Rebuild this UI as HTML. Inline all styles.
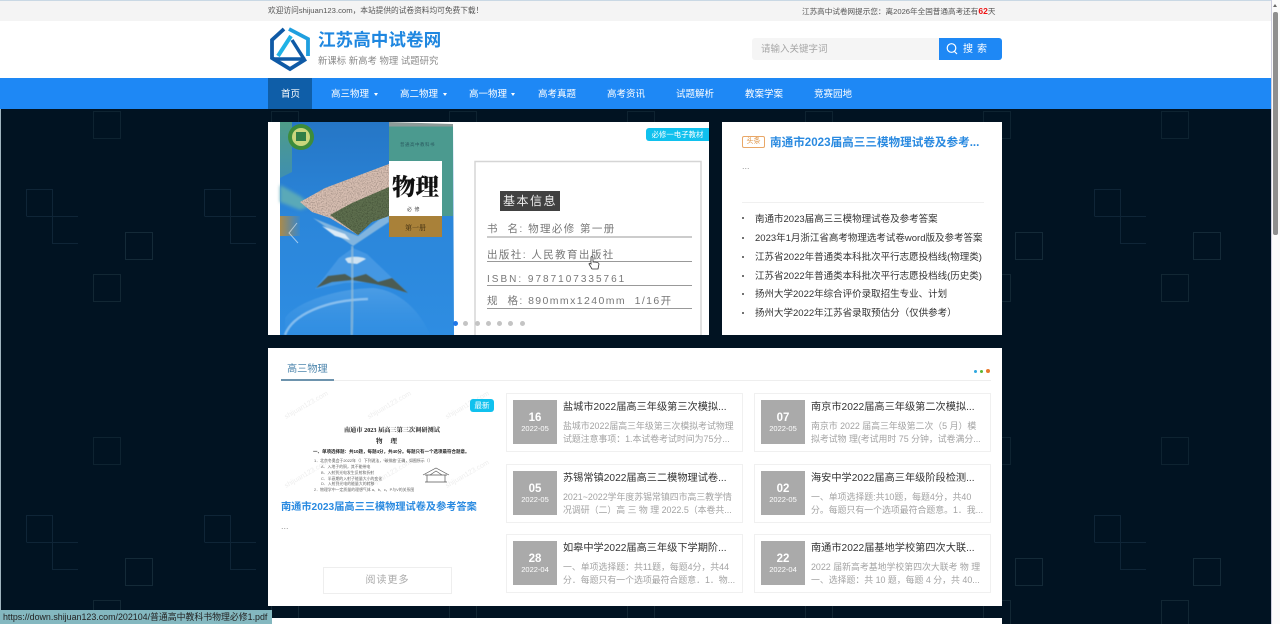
<!DOCTYPE html>
<html lang="zh"><head><meta charset="utf-8"><title>江苏高中试卷网</title>
<style>
html,body{margin:0;padding:0;width:1280px;height:624px;overflow:hidden;background:#011322}
body{position:relative;font-family:"Liberation Sans","Noto Sans CJK SC",sans-serif;color:#333}
.a,.t{position:absolute;white-space:nowrap}
.t{line-height:14px}
.n{top:88px;font-size:9.5px;color:#fff}
.car{position:absolute;width:0;height:0;border-left:2.5px solid transparent;border-right:2.5px solid transparent;border-top:3px solid #fff;top:92.5px}
.card{position:absolute;width:235px;height:57px;background:#fff;border:1px solid #f0f0f0;box-sizing:content-box;overflow:hidden}
.d{position:absolute;left:6px;top:6px;width:44px;height:44px;background:#aaa;color:#fff;text-align:center}
.d b{position:absolute;left:0;right:0;top:11px;font-size:11.5px;line-height:14px}
.d i{position:absolute;left:0;right:0;top:23px;font-style:normal;font-size:7.5px;line-height:12px}
.h{position:absolute;left:56px;top:7px;font-size:10.2px;line-height:14px;color:#333;white-space:nowrap}
.p{position:absolute;left:56px;font-size:8.9px;line-height:12px;color:#a3a3a3;white-space:nowrap}
.l{position:absolute;left:755px;font-size:9.5px;line-height:14px;color:#333;white-space:nowrap}
.b{position:absolute;left:742px;width:2px;height:2px;border-radius:50%;background:#444}
.r{position:absolute;left:487px;width:205px;height:1px;background:#999}
.q{position:absolute;left:487px;font-size:10.5px;line-height:14px;color:#777;letter-spacing:1.4px;white-space:nowrap}
.dot{position:absolute;top:321px;width:5px;height:5px;border-radius:50%;background:#c4c4c4}
.w{position:absolute;font-size:7px;color:#eee;transform:rotate(-30deg);white-space:nowrap}
</style></head><body>

<svg class="a" style="left:0;top:109px" width="1271" height="515">
<defs><pattern id="pt" x="0" y="-109" width="178" height="326" patternUnits="userSpaceOnUse">
<g fill="none" stroke-width="1">
<rect x="125.500" y="232.500" width="27" height="27" stroke="#142a38"/>
<path d="M26.500 216V189.500H52.500V216.500H26.500M52.500 216.500H78M52.500 216.500V243.500H78" stroke="#11273a" stroke-opacity=".9"/>
<rect x="93.500" y="111.500" width="27" height="27" stroke="#0e2331"/>
<rect x="93.500" y="274.500" width="27" height="27" stroke="#122734"/>
</g></pattern></defs>
<rect width="1271" height="515" fill="#011322"/><rect width="1271" height="515" fill="url(#pt)"/>
</svg>
<div class="a" style="left:0;top:0;width:1px;height:624px;background:#9fb4bf"></div>

<!-- top bar -->
<div class="a" style="left:0;top:0;width:1271px;height:21px;background:#f4f4f4;border-top:1px solid #c9d8e4;box-sizing:border-box"></div>
<div class="t" style="left:268px;top:4px;font-size:7.7px;color:#555">欢迎访问shijuan123.com，本站提供的试卷资料均可免费下载！</div>
<div class="t" style="left:802px;top:4px;font-size:7.6px;color:#555">江苏高中试卷网提示您：离2026年全国普通高考还有<b style="color:#e11;font-size:8.5px">62</b>天</div>

<!-- header -->
<div class="a" style="left:0;top:21px;width:1271px;height:57px;background:#fff"></div>
<svg class="a" style="left:268px;top:26px" width="44" height="46" viewBox="268 26 44 46">
<path d="M284 29 272 40 272 58 290 69 306 59" fill="none" stroke="#0f5aa6" stroke-width="3.800"/>
<path d="M289 29 308 39 308 56" fill="none" stroke="#1f9fdf" stroke-width="3.800"/>
<path d="M291 36 278 56" fill="none" stroke="#1fb2e6" stroke-width="4"/>
<path d="M292 40 304 59" fill="none" stroke="#0f5aa6" stroke-width="3.500"/>
<path d="M273 59H304" fill="none" stroke="#0f5aa6" stroke-width="3.500"/>
</svg>
<div class="a" style="left:318px;top:29px;font-size:17.6px;line-height:22px;font-weight:bold;color:#1f87e0">江苏高中试卷网</div>
<div class="a" style="left:318px;top:54px;font-size:9.4px;line-height:14px;color:#8a8a8a">新课标 新高考 物理 试题研究</div>

<div class="a" style="left:752px;top:38px;width:187px;height:22px;background:#f5f5f5;border-radius:3px 0 0 3px"></div>
<div class="a" style="left:761px;top:43px;font-size:9.5px;line-height:14px;color:#a5a5a5">请输入关键字词</div>
<div class="a" style="left:939px;top:38px;width:63px;height:22px;background:#1e88f5;border-radius:0 3px 3px 0"></div>
<svg class="a" style="left:945px;top:42px" width="14" height="14"><circle cx="6.500" cy="6" r="4.300" fill="none" stroke="#fff" stroke-width="1.200"/><path d="M9.500 9.500 12 12" stroke="#fff" stroke-width="1.200"/></svg>
<div class="a" style="left:963px;top:43px;font-size:10px;line-height:14px;color:#fff;letter-spacing:4px">搜索</div>

<!-- nav -->
<div class="a" style="left:0;top:78px;width:1271px;height:31px;background:#1e88f5"></div>
<div class="a" style="left:268px;top:78px;width:44px;height:31px;background:#0f5ea8"></div>
<div class="t n" style="left:281px">首页</div>
<div class="t n" style="left:331px">高三物理</div><div class="car" style="left:373.500px"></div>
<div class="t n" style="left:400px">高二物理</div><div class="car" style="left:442.500px"></div>
<div class="t n" style="left:469px">高一物理</div><div class="car" style="left:510.500px"></div>
<div class="t n" style="left:538px">高考真题</div>
<div class="t n" style="left:607px">高考资讯</div>
<div class="t n" style="left:676px">试题解析</div>
<div class="t n" style="left:745px">教案学案</div>
<div class="t n" style="left:814px">竞赛园地</div>

<!-- carousel -->
<div class="a" style="left:268px;top:122px;width:441px;height:213px;background:#fff"></div>
<svg class="a" style="left:268px;top:122px" width="441" height="213" viewBox="268 122 441 213">
<defs>
<linearGradient id="bl" x1="0" y1="0" x2="0" y2="1"><stop offset="0" stop-color="#2576c6"/><stop offset=".45" stop-color="#2b86da"/><stop offset="1" stop-color="#2e8de2"/></linearGradient>
<linearGradient id="br" x1="0" y1="0" x2="1" y2="0"><stop offset="0" stop-color="#a98a4c"/><stop offset="1" stop-color="#a98a4c" stop-opacity=".1"/></linearGradient>
<linearGradient id="te" x1="0" y1="0" x2="0" y2="1"><stop offset="0" stop-color="#4f9c88"/><stop offset="1" stop-color="#3f8fb0"/></linearGradient>
<linearGradient id="gl" x1="0" y1="0" x2="0" y2="1"><stop offset="0" stop-color="#8fc4f0" stop-opacity=".9"/><stop offset="1" stop-color="#4fa3ec" stop-opacity=".2"/></linearGradient>
<filter id="gr" x="0" y="0" width="1" height="1"><feTurbulence type="fractalNoise" baseFrequency=".8" numOctaves="2" seed="3" result="n"/><feColorMatrix in="n" type="matrix" values="0 0 0 0 0 0 0 0 0 0 0 0 0 0 0 0 0 0 1.200 -.48" result="m"/><feComposite in="m" in2="SourceAlpha" operator="in" result="c"/><feMerge><feMergeNode in="SourceGraphic"/><feMergeNode in="c"/></feMerge></filter>
<filter id="s1"><feGaussianBlur stdDeviation=".5"/></filter>
<filter id="s2"><feGaussianBlur stdDeviation="1.500"/></filter>
</defs>
<path d="M280 122H389V124H453L454 335H280Z" fill="url(#bl)"/>
<path d="M389 124H453V216H389Z" fill="#4b9a8f"/>
<path d="M389 122 453 124V126.500H389Z" fill="#8c9a98"/>
<path d="M280 122H292V172L280 178Z" fill="url(#te)"/>
<path d="M280 185 300 196 312 206 300 210 280 202Z" fill="#5aa9b8" filter="url(#s2)"/>
<path d="M280 216H300V236H280Z" fill="url(#br)"/>
<circle cx="301" cy="137" r="13" fill="#3d8c3b"/><circle cx="301" cy="137" r="9" fill="#c9d67c"/><rect x="296" y="132" width="10" height="9" fill="#2f7e47"/>
<!-- lower glass -->
<path d="M339 258 315 289 345 283 380 282 408 293 367 254 353 248Z" fill="#4f9ee6" opacity=".7" filter="url(#s1)"/>
<path d="M316 288 328 276 345 274 352 278 366 274 378 282 392 278 408 293 388 287 375 284 352 280 332 282Z" fill="#4c5c52" filter="url(#s1)"/>
<path d="M345 259C348 256 362 256 366 259L357 264 348 263Z" fill="#cfe3f2" filter="url(#s1)"/>
<path d="M285 335V318C293 305 330 289 373 288 398 290 420 310 430 335Z" fill="url(#gl)" opacity=".35" filter="url(#s1)"/>
<path d="M285 335C292 315 325 300 368 299" fill="none" stroke="#c3e0f8" stroke-width="2.500" opacity=".55" filter="url(#s1)"/>
<path d="M353 246V300L351 335" fill="none" stroke="#9cc0d6" stroke-width="4" opacity=".6" filter="url(#s1)"/>
<!-- upper glass -->
<path d="M313 218 353 246 389 222V212L358 236Z" fill="#8fbde0" opacity=".85" filter="url(#s1)"/>
<path d="M322 226 345 234 350 240 335 236Z" fill="#dcebf6" filter="url(#s1)"/>
<!-- sand -->
<path d="M300 202 325 188 389 164V190L358 235 330 218 312 212Z" fill="#d8bfb2" filter="url(#gr)"/>
<path d="M389 187V216L372 222 358 235 330 215 352 203Z" fill="#5f7050" filter="url(#gr)"/>
<!-- cover panel -->
<rect x="389" y="161" width="53" height="55" fill="#fff"/>
<rect x="389" y="216" width="53" height="21" fill="#a98139"/>
<text x="392" y="195" font-family="'Noto Serif CJK SC',serif" font-weight="900" font-size="23.500" fill="#111">物理</text>
<text x="407" y="211" font-family="'Noto Sans CJK SC',sans-serif" font-size="5" fill="#444" letter-spacing="2.500">必修</text>
<text x="405" y="230" font-family="'Noto Serif CJK SC',serif" font-size="7" fill="#3a2a10">第一册</text>
<text x="400" y="146" font-family="'Noto Sans CJK SC',sans-serif" font-size="4.500" fill="#2a5a60" letter-spacing=".5">普通高中教科书</text>
<path d="M297 223 289 233 298 243" fill="none" stroke="#fff" stroke-width="1" opacity=".55"/>
<rect x="475" y="161.500" width="226" height="180" fill="none" stroke="#d5d5d5" stroke-width="1.500"/>
</svg>
<div class="a" style="left:646px;top:128px;width:63px;height:13px;background:#10c1ee;border-radius:3px 0 0 3px;color:#fff;font-size:7.400px;line-height:13px;text-align:center">必修一电子教材</div>
<div class="a" style="left:500px;top:191px;width:60px;height:20px;background:#414141;color:#eee;font-size:12px;line-height:20px;text-align:center;letter-spacing:1.500px">基本信息</div>
<div class="q" style="top:222px">书&nbsp; 名: 物理必修 第一册</div><div class="r" style="top:236px;background:#ccc;height:2px"></div>
<div class="q" style="top:248px">出版社: 人民教育出版社</div><div class="r" style="top:261px"></div>
<div class="q" style="top:273px;letter-spacing:2px;font-size:10px">ISBN: 9787107335761</div><div class="r" style="top:285px"></div>
<div class="q" style="top:294px">规&nbsp; 格: 890mmx1240mm&nbsp; 1/16开</div><div class="r" style="top:308px"></div>
<div class="dot" style="left:453px;background:#1e78e8"></div>
<div class="dot" style="left:463px"></div><div class="dot" style="left:474.500px"></div><div class="dot" style="left:485.500px"></div><div class="dot" style="left:497px"></div><div class="dot" style="left:508px"></div><div class="dot" style="left:519.500px"></div>
<svg class="a" style="left:587px;top:255px" width="14" height="16"><path d="M4 2c1-1 2 0 2 1v4c2 0 6 0 6 2l-1 5H5L2 9c0-1 1-1 2 0z" fill="#fff" stroke="#333" stroke-width=".8"/></svg>

<!-- right panel -->
<div class="a" style="left:722px;top:122px;width:280px;height:213px;background:#fff"></div>
<div class="a" style="left:742px;top:136px;width:21px;height:10px;border:1px solid #e9a767;border-radius:2px;color:#dd9040;font-size:7px;line-height:10px;text-align:center">头条</div>
<div class="a" style="left:770px;top:135px;font-size:11.600px;line-height:16px;font-weight:bold;color:#2a8ae0">南通市2023届高三三模物理试卷及参考...</div>
<div class="a" style="left:742px;top:159px;font-size:9px;line-height:14px;color:#999">...</div>
<div class="a" style="left:742px;top:202px;width:242px;height:1px;background:#f0f0f0"></div>
<div class="b" style="top:217px"></div><div class="l" style="top:212.500px">南通市2023届高三三模物理试卷及参考答案</div>
<div class="b" style="top:237px"></div><div class="l" style="top:231.500px">2023年1月浙江省高考物理选考试卷word版及参考答案</div>
<div class="b" style="top:256px"></div><div class="l" style="top:250.500px">江苏省2022年普通类本科批次平行志愿投档线(物理类)</div>
<div class="b" style="top:275px"></div><div class="l" style="top:269.500px">江苏省2022年普通类本科批次平行志愿投档线(历史类)</div>
<div class="b" style="top:293px"></div><div class="l" style="top:287.500px">扬州大学2022年综合评价录取招生专业、计划</div>
<div class="b" style="top:312px"></div><div class="l" style="top:306.500px">扬州大学2022年江苏省录取预估分（仅供参考）</div>

<!-- section -->
<div class="a" style="left:268px;top:348px;width:734px;height:258px;background:#fff"></div>
<div class="a" style="left:287px;top:362.500px;font-size:10.200px;line-height:14px;color:#4d86ad">高三物理</div>
<div class="a" style="left:281px;top:380px;width:710px;height:1px;background:#eee"></div>
<div class="a" style="left:281px;top:379px;width:53px;height:2px;background:#6d93ad"></div>
<div class="a" style="left:974px;top:370px;width:3px;height:3px;border-radius:50%;background:#2ea7e0"></div>
<div class="a" style="left:980px;top:370px;width:3px;height:3px;border-radius:50%;background:#5cb531"></div>
<div class="a" style="left:986px;top:369px;width:4px;height:4px;border-radius:50%;background:#e8792b"></div>

<!-- doc image -->
<div class="w" style="left:282px;top:402px">shijuan123.com</div>
<div class="w" style="left:365px;top:402px">shijuan123.com</div>
<div class="w" style="left:443px;top:402px">shijuan123.com</div>
<div class="w" style="left:282px;top:471px">shijuan123.com</div>
<div class="w" style="left:365px;top:471px">shijuan123.com</div>
<div class="w" style="left:443px;top:471px">shijuan123.com</div>
<div class="a" style="left:344px;top:426px;font-size:6.200px;line-height:10px;color:#222;font-weight:bold;font-family:'Liberation Serif','Noto Serif CJK SC',serif">南通市 2023 届高三第三次调研测试</div>
<div class="a" style="left:376px;top:436.500px;font-size:6.500px;line-height:10px;color:#222;font-weight:bold;letter-spacing:8px;font-family:'Liberation Serif','Noto Serif CJK SC',serif">物理</div>
<div class="a" style="left:313px;top:448px;font-size:4.500px;line-height:8px;color:#222;font-weight:bold">一、单项选择题：共10题，每题4分，共40分。每题只有一个选项最符合题意。</div>
<div class="a" style="left:314px;top:457px;font-size:3.900px;line-height:8px;color:#555">1．北京冬奥会于2022年（）下列说法，“碳排放”正确，如图所示（）</div>
<div class="a" style="left:321px;top:464px;font-size:3.900px;line-height:5.800px;color:#666;white-space:pre">A．入地子的铜，其不能带电
B．入射到光电发生反射和折射
C．半衰期的入射子能量大小的变化
D．入射到光电的能量大的转移</div>
<div class="a" style="left:314px;top:487px;font-size:3.900px;line-height:6px;color:#666">2．物理学中一定质量的理想气体 a、b、c，P与V的关系图</div>
<svg class="a" style="left:422px;top:465px" width="28" height="22"><path d="M1 10 14 3 27 10M3 10H25M5 10V17M23 10V17M3 17H25" fill="none" stroke="#555" stroke-width=".7"/><path d="M8 10 14 6 20 10" fill="none" stroke="#555" stroke-width=".6"/></svg>
<div class="a" style="left:470px;top:399px;width:24px;height:13px;background:#10c1ee;border-radius:3px;color:#fff;font-size:7.600px;line-height:13px;text-align:center">最新</div>
<div class="a" style="left:281px;top:500.500px;font-size:10.200px;line-height:14px;font-weight:bold;color:#2a8ae0">南通市2023届高三三模物理试卷及参考答案</div>
<div class="a" style="left:281px;top:519px;font-size:9px;line-height:14px;color:#999">...</div>
<div class="a" style="left:323px;top:567px;width:127px;height:25px;border:1px solid #eee;color:#aaa;font-size:10px;line-height:26px;text-align:center;letter-spacing:1px">阅读更多</div>

<!-- cards -->
<div class="card" style="left:506px;top:393px"><div class="d"><b>16</b><i>2022-05</i></div><div class="h">盐城市2022届高三年级第三次模拟...</div><div class="p" style="top:26px">盐城市2022届高三年级第三次模拟考试物理</div><div class="p" style="top:39px">试题注意事项：1.本试卷考试时间为75分...</div></div>
<div class="card" style="left:754px;top:393px"><div class="d"><b>07</b><i>2022-05</i></div><div class="h">南京市2022届高三年级第二次模拟...</div><div class="p" style="top:26px">南京市 2022 届高三年级第二次（5 月）模</div><div class="p" style="top:39px">拟考试物 理(考试用时 75 分钟，试卷满分...</div></div>
<div class="card" style="left:506px;top:464px"><div class="d"><b>05</b><i>2022-05</i></div><div class="h">苏锡常镇2022届高三二模物理试卷...</div><div class="p" style="top:26px">2021~2022学年度苏锡常镇四市高三教学情</div><div class="p" style="top:39px">况调研（二）高 三 物 理 2022.5（本卷共...</div></div>
<div class="card" style="left:754px;top:464px"><div class="d"><b>02</b><i>2022-05</i></div><div class="h">海安中学2022届高三年级阶段检测...</div><div class="p" style="top:26px">一、单项选择题:共10题，每题4分，共40</div><div class="p" style="top:39px">分。每题只有一个选项最符合题意。1．我...</div></div>
<div class="card" style="left:506px;top:534px"><div class="d"><b>28</b><i>2022-04</i></div><div class="h">如皋中学2022届高三年级下学期阶...</div><div class="p" style="top:26px">一、单项选择题：共11题，每题4分，共44</div><div class="p" style="top:39px">分．每题只有一个选项最符合题意．1．物...</div></div>
<div class="card" style="left:754px;top:534px"><div class="d"><b>22</b><i>2022-04</i></div><div class="h">南通市2022届基地学校第四次大联...</div><div class="p" style="top:26px">2022 届新高考基地学校第四次大联考 物 理</div><div class="p" style="top:39px">一、选择题：共 10 题，每题 4 分，共 40...</div></div>

<div class="a" style="left:268px;top:618px;width:734px;height:6px;background:#fff"></div>

<!-- status bar -->
<div class="a" style="left:0;top:610px;width:272px;height:14px;background:#84b8c0;color:#222;font-size:8.900px;line-height:14px;padding-left:3px;box-sizing:border-box;overflow:hidden">https://down.shijuan123.com/202104/普通高中教科书物理必修1.pdf</div>

<!-- scrollbar -->
<div class="a" style="left:1271px;top:0;width:9px;height:624px;background:#fbfbfb;border-left:1px solid #ccd;box-sizing:border-box"></div>
<div class="a" style="left:1273px;top:12px;width:5px;height:223px;background:#8f8f8f;border-radius:2px"></div>
<div class="a" style="left:1273px;top:4px;width:0;height:0;border-left:2.500px solid transparent;border-right:2.500px solid transparent;border-bottom:3px solid #666"></div>
</body></html>
